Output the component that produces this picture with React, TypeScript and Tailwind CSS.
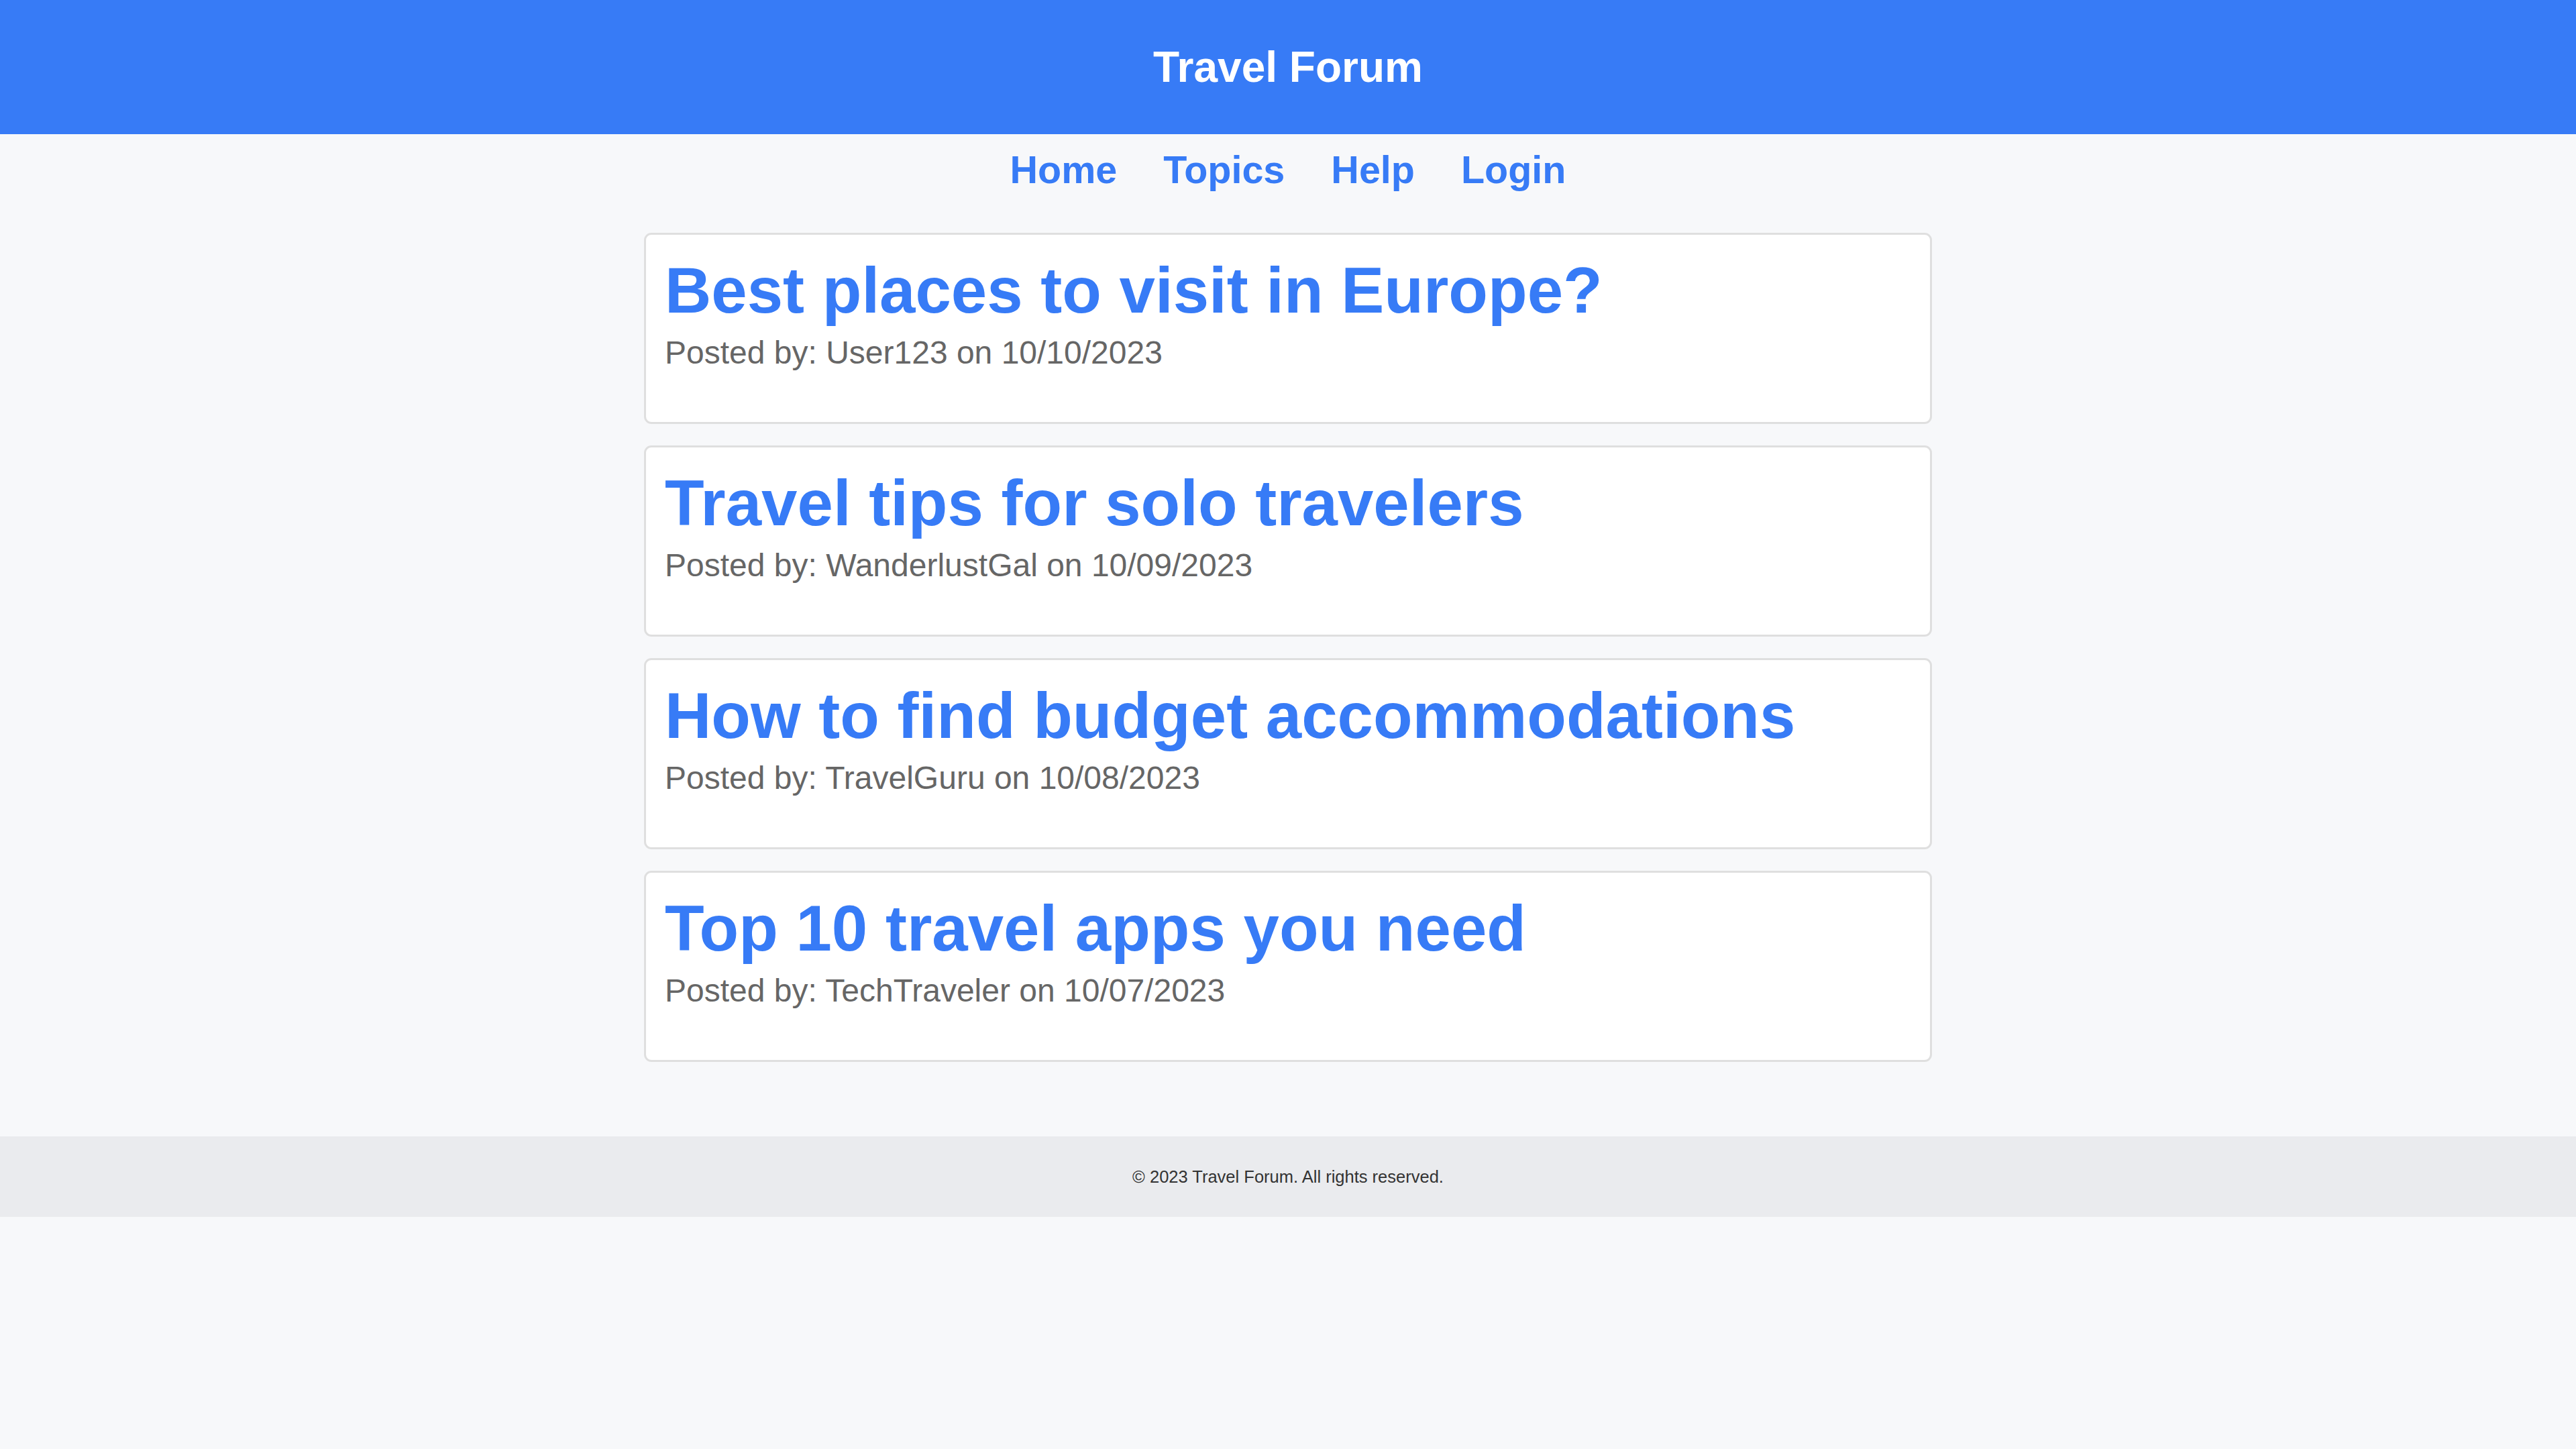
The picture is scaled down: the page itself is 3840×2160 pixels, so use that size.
const POSTS = [
  { title: 'Best places to visit in Europe?', author: 'User123', date: '10/10/2023' },
  { title: 'Travel tips for solo travelers', author: 'WanderlustGal', date: '10/09/2023' },
  { title: 'How to find budget accommodations', author: 'TravelGuru', date: '10/08/2023' },
  { title: 'Top 10 travel apps you need', author: 'TechTraveler', date: '10/07/2023' },
]

const NAV = ['Home', 'Topics', 'Help', 'Login']

export default function App() {
  return (
    <div className="min-h-screen bg-[#f7f8fa] font-['Liberation_Sans',Arial,sans-serif]">
      <header className="h-[200px] bg-[#377bf6] flex items-center justify-center">
        <h1 className="text-[64px] font-bold text-white leading-none">Travel Forum</h1>
      </header>

      <nav className="flex justify-center gap-[69px] pt-[20px] pb-[60px]">
        {NAV.map(item => (
          <a key={item} href="#" className="text-[57.5px] leading-[67px] font-bold text-[#377bf6] no-underline">
            {item}
          </a>
        ))}
      </nav>

      <main className="w-[1920px] mx-auto flex flex-col gap-[32px]">
        {POSTS.map(post => (
          <div
            key={post.title}
            className="bg-white border-[3px] border-[#dfdfdf] rounded-[11px] pl-[28px] pr-[26px] pt-[28px] pb-[76px]"
          >
            <h2 className="text-[96px] leading-[110px] font-bold text-[#377bf6]">{post.title}</h2>
            <p className="mt-[10px] text-[48px] leading-[55px] text-[#666666]">
              Posted by: {post.author} on {post.date}
            </p>
          </div>
        ))}
      </main>

      <footer className="mt-[111px] h-[120px] bg-[#eaebee] flex items-center justify-center">
        <p className="text-[25.5px] text-[#333333]">© 2023 Travel Forum. All rights reserved.</p>
      </footer>
    </div>
  )
}
